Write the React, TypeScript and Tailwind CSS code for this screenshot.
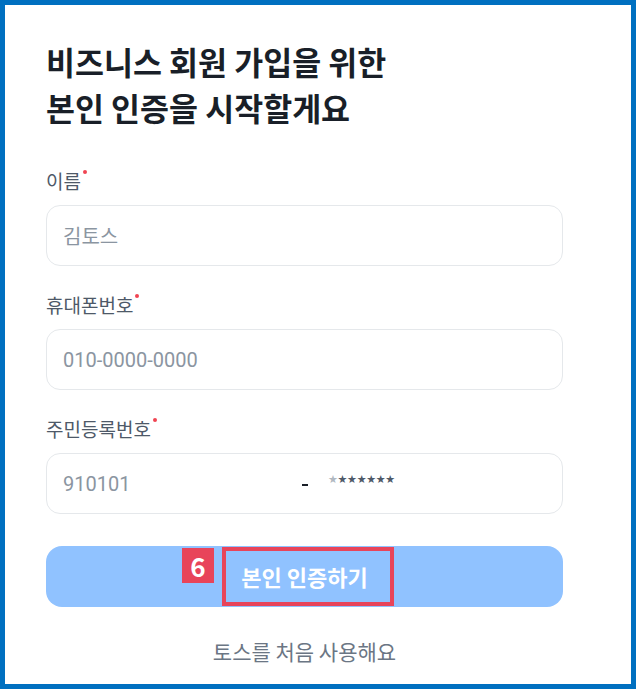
const KR = "font-['Noto_Sans_CJK_KR',sans-serif]";

function Label({ text }: { text: string }) {
  return (
    <div className="flex h-[24px] items-center">
      <span className="relative text-[19px] leading-[24px] text-[#4e5968]">
        {text}
        <span className="absolute -right-[6px] top-[1px] h-[4px] w-[4px] rounded-full bg-[#f04452]" />
      </span>
    </div>
  );
}

function Field({ label, children }: { label: string; children: React.ReactNode }) {
  return (
    <div className="flex flex-col gap-[12px]">
      <Label text={label} />
      <div className="flex h-[61px] items-center rounded-[14px] border border-[#e5e8eb] bg-white px-[16px]">
        {children}
      </div>
    </div>
  );
}

export default function App() {
  return (
    <div className={`h-[689px] w-[636px] border-[5px] border-[#0070c0] bg-white ${KR}`}>
      <div className="flex w-[558px] flex-col pl-[41px] pt-[33px]">
        {/* Title */}
        <h1 className="text-[31.5px] font-bold leading-[46px] text-[#191f28]">
          비즈니스 회원 가입을 위한
          <br />
          본인 인증을 시작할게요
        </h1>

        {/* Form */}
        <div className="mt-[39px] flex w-[517px] flex-col gap-[27px]">
          <Field label="이름">
            <span className="text-[20px] text-[#8b95a1]">김토스</span>
          </Field>
          <Field label="휴대폰번호">
            <span className="font-['Roboto',sans-serif] text-[20px] text-[#8b95a1]">010-0000-0000</span>
          </Field>
          <Field label="주민등록번호">
            <div className="flex w-full items-center">
              <span className="w-[239px] font-['Roboto',sans-serif] text-[20px] text-[#8b95a1]">910101</span>
              <span className="mt-[3px] h-[2px] w-[6px] bg-[#191f28]" />
              <span className="ml-[20px] -mt-[6px] font-['DejaVu_Sans',sans-serif] text-[11px] tracking-[-0.3px] text-[#4e5968]">
                <span className="text-[#b0b8c1]">★</span>★★★★★★
              </span>
            </div>
          </Field>
        </div>

        {/* Submit */}
        <div className="relative mt-[32px] flex h-[61px] w-[517px] items-center justify-center rounded-[16px] bg-[#90c2ff]">
          <span className="text-[22px] font-bold text-white">본인 인증하기</span>
          <div className="absolute left-[176px] top-[1px] h-[59px] w-[172px] border-[4px] border-[#e8445a]" />
          <div className="absolute left-[136px] top-[2px] flex h-[35px] w-[32px] items-center justify-center bg-[#e8445a] text-[26px] font-bold leading-none text-white">
            6
          </div>
        </div>

        <p className="mt-[31px] w-[517px] text-center text-[21px] leading-[26px] text-[#6b7684]">
          토스를 처음 사용해요
        </p>
      </div>
    </div>
  );
}
